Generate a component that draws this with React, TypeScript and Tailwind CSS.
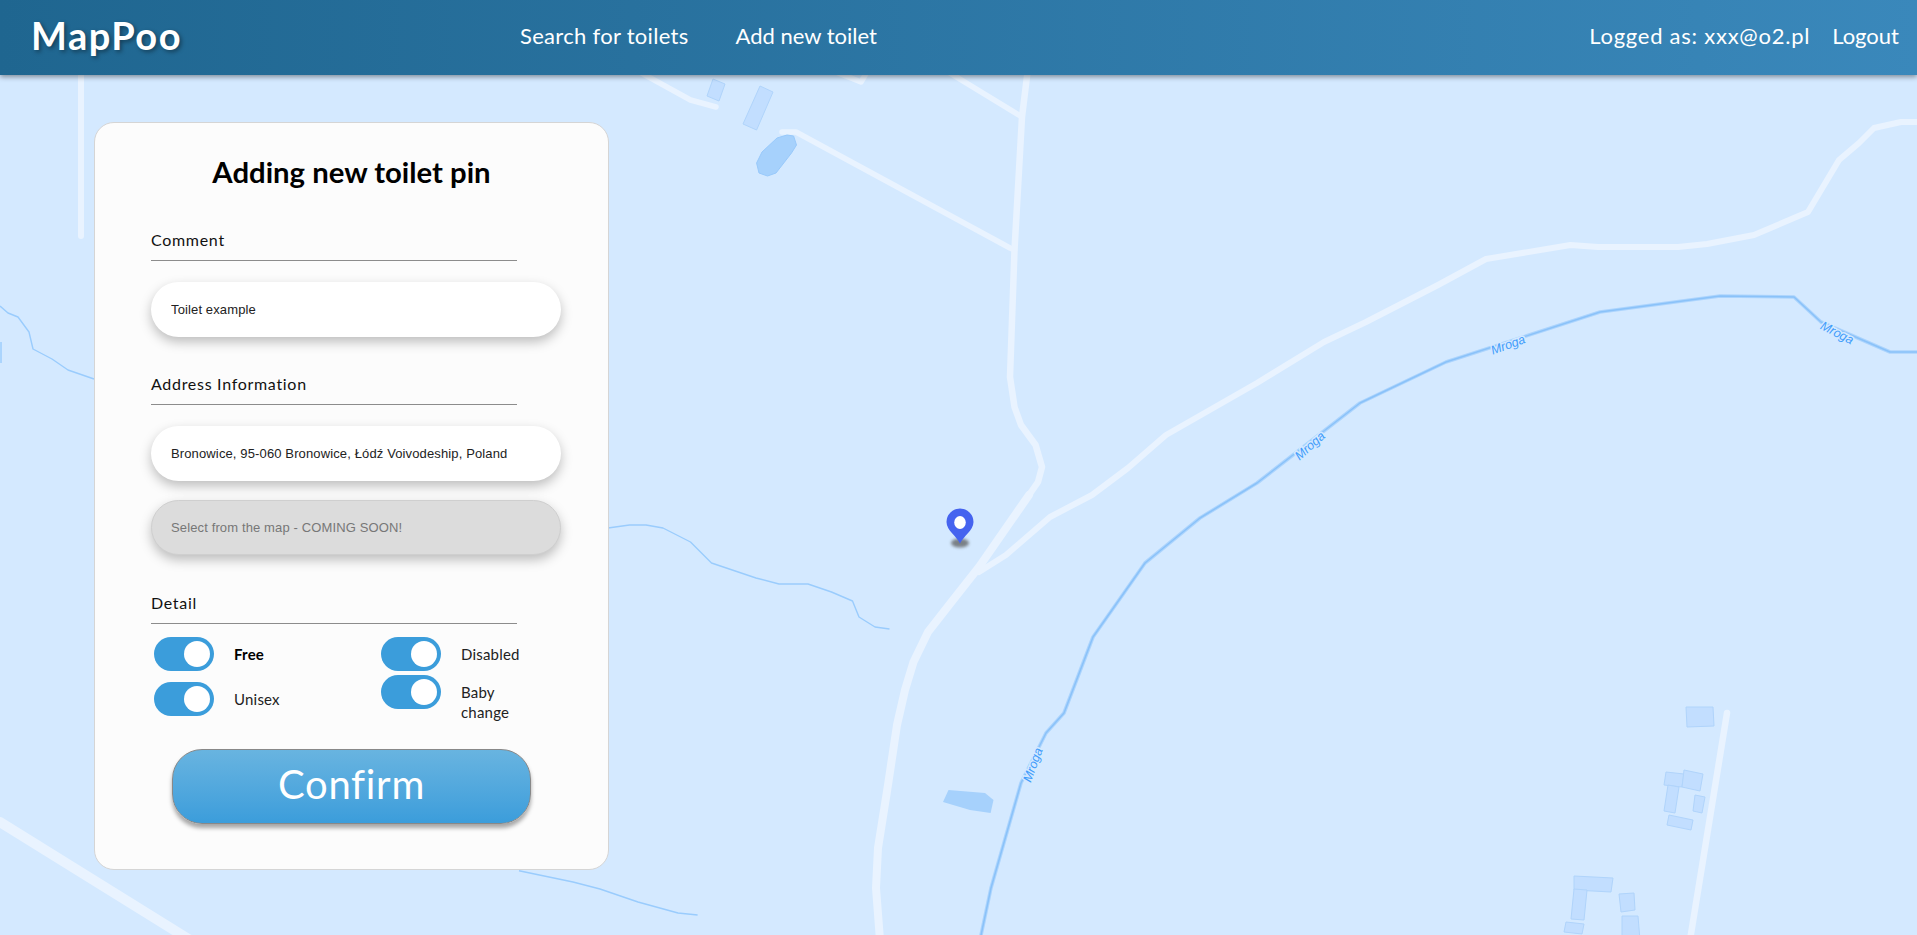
import React from "react";

const buildings = [
  "713,79 725,84 719,101 707,96",
  "760,86 773,92 756.6,130 743,124",
  "1686,707 1713,707 1714,726 1687,727",
  "1666,772 1684,774 1682,787 1664,785",
  "1684,770 1703,774 1700,791 1682,787",
  "1668,785 1679,787 1675,813 1664,811",
  "1695,795 1705,797 1702,813 1693,811",
  "1669,815 1693,820 1691,830 1667,825",
  "1574,876 1613,878 1611,892 1574,890",
  "1574,889 1587,890 1584,920 1571,919",
  "1566,922 1584,924 1582,934 1564,932",
  "1619,894 1634,893 1635,910 1621,912",
  "1622,916 1638,916 1640,940 1622,940",
];

const roads = [
  { w: 6.5, p: "1029,60 1022,117 1014.5,250 1010,377 1014.5,407 1021,425 1035.6,445 1042,467 1038,482 1029,495" },
  { w: 8, p: "1029,495 979,567 953,600 928,632 913.5,662 905,690 897,725 888,785 878,848 876,888 880,940" },
  { w: 6, p: "1917,122 1901,122 1874,128 1859,143 1839,160 1808,212 1754,235 1707,244 1678,247 1598,247 1570.5,245 1486,259 1438,285 1366,322 1324,342 1257,383 1166,435 1128,468 1092,495 1050,517 1006,555 979,572" },
  { w: 5.5, p: "782,132 796,132 1010,248 1014.5,250" },
  { w: 5.5, p: "945,70 1022,117" },
  { w: 5.5, p: "636,70 690.5,100 716,107" },
  { w: 5.5, p: "836,72 861,82 867,72" },
  { w: 6, p: "81,70 81,236" },
  { w: 10, p: "0,822 190,940" },
  { w: 6.5, p: "1727,713 1690,940" },
];

const streams = [
  "608,528 629.5,525 646,525 663,528 690.5,542 711.5,563 756,578 779,584 808,584 831.5,592 852.5,601 859,617 875,627 889.5,629",
  "519,870.7 573,882 600,889 638,902 678,913 697.6,915",
  "0,306 8,313 18,317 29,332 33,349 52,359 68,370 94,379",
  "1,342 1,363",
];

const river =
  "980,940 991,888 1021,783 1046,733 1064,713 1093,637 1145,563 1200,518 1257,483 1360,403 1446,362 1600,312 1720,296 1794,297 1821,322 1890,352 1917,352";

const riverLabels = [
  { x: 1033, y: 765, r: -70 },
  { x: 1310, y: 446, r: -42 },
  { x: 1508, y: 345, r: -20 },
  { x: 1837, y: 333, r: 27 },
];

function MapBackground() {
  return (
    <svg className="absolute inset-0 h-full w-full" viewBox="0 75 1917 860" fill="none">
      <defs>
        <filter id="pinShadow" x="-50%" y="-100%" width="200%" height="300%">
          <feGaussianBlur stdDeviation="1.6" />
        </filter>
      </defs>
      {roads.map((r) => (
        <polyline key={r.p} points={r.p} stroke="#e9f3ff" strokeWidth={r.w} strokeLinecap="round" strokeLinejoin="round" />
      ))}
      {buildings.map((p) => (
        <polygon key={p} points={p} fill="#c2deff" stroke="#b0d4fb" strokeWidth="1" />
      ))}
      <polygon
        points="793.6,136 796.5,145 791.5,153 776,173 767.5,176 759,173 756.6,163 762,152 777,138 787,135"
        fill="#a6d1fc"
        stroke="#98c9fb"
        strokeWidth="1"
        strokeLinejoin="round"
      />
      <polygon points="948.5,790 985,793 993.5,800 990.6,813 970,810 943,802" fill="#a6d1fc" />
      {streams.map((p) => (
        <polyline key={p} points={p} stroke="#9accfd" strokeWidth="1.4" strokeLinejoin="round" />
      ))}
      <polyline points={river} stroke="#acd4fd" strokeWidth="3.6" strokeLinejoin="round" />
      <polyline points={river} stroke="#8ac2f9" strokeWidth="1.5" strokeLinejoin="round" />
      {riverLabels.map((l) => (
        <g key={l.x} transform={`translate(${l.x} ${l.y}) rotate(${l.r})`}>
          <text
            textAnchor="middle"
            dominantBaseline="central"
            fontFamily="Liberation Sans, sans-serif"
            fontStyle="italic"
            fontSize="12.5"
            fill="#3f9cfb"
            stroke="#d4e9ff"
            strokeWidth="3"
            paintOrder="stroke"
          >
            Mroga
          </text>
        </g>
      ))}
      <ellipse cx="960" cy="543" rx="9" ry="4.5" fill="#555" opacity="0.7" filter="url(#pinShadow)" />
      <path
        d="M960 543.5 C957 536.5 946.5 530.5 946.5 522 A13.5 13.5 0 0 1 973.5 522 C973.5 530.5 963 536.5 960 543.5 Z"
        fill="#4563ef"
      />
      <ellipse cx="960" cy="522.5" rx="5.8" ry="6.4" fill="#fff" />
    </svg>
  );
}

function SectionLabel({ children, className }: { children: React.ReactNode; className: string }) {
  return (
    <div className={`w-[366px] h-[33px] border-b border-[#8c8c8c] text-[16px] leading-[24px] tracking-[0.7px] text-[#111] ${className}`}>
      {children}
    </div>
  );
}

function PillInput({ value, className, disabled }: { value: string; className: string; disabled?: boolean }) {
  return (
    <input
      readOnly
      value={value}
      disabled={disabled}
      className={`block w-[410px] h-[55px] rounded-full [font-family:'Liberation_Sans',Arial,sans-serif] text-[13px] tracking-[0.13px] outline-none shadow-[0_5px_12px_rgba(0,0,0,0.25)] ${
        disabled
          ? "bg-[#dcdcdc] border border-[#cfcfcf] pl-[19px] pr-[19px] text-[#777]"
          : "bg-white px-[20px] text-[#222]"
      } ${className}`}
    />
  );
}

function Toggle({ label, bold, labelClass }: { label: string; bold?: boolean; labelClass?: string }) {
  return (
    <div className="flex items-start">
      <div className="flex h-[34px] w-[60px] shrink-0 items-center justify-end rounded-full bg-[#3b9ddb] pr-[4px]">
        <div className="h-[26px] w-[26px] rounded-full bg-white" />
      </div>
      <div className={`ml-[20px] mt-[7px] text-[15px] leading-[20px] tracking-[0.2px] text-[#222] ${bold ? "font-bold text-black" : ""} ${labelClass ?? ""}`}>
        {label}
      </div>
    </div>
  );
}

export default function App() {
  return (
    <div className="flex h-[935px] flex-col overflow-hidden bg-[#d4e9ff] [font-family:Lato,sans-serif]">
      <header className="relative z-10 flex h-[75px] shrink-0 items-center bg-gradient-to-r from-[#1f6690] to-[#3a88bb] pb-[4px] text-white shadow-[0_2px_5px_rgba(0,0,0,0.4)]">
        <div className="mb-[2px] ml-[31px] w-[489px] text-[38px] font-bold leading-none tracking-[1.5px] [text-shadow:2px_2px_4px_rgba(0,0,0,0.4)]">
          MapPoo
        </div>
        <nav className="flex gap-[47px] text-[22px]">
          <span className="tracking-[0.3px]">Search for toilets</span>
          <span>Add new toilet</span>
        </nav>
        <div className="ml-auto mr-[18px] flex gap-[22px] text-[22px]">
          <span className="tracking-[0.75px]">Logged as: xxx@o2.pl</span>
          <span>Logout</span>
        </div>
      </header>
      <main className="relative flex-1">
        <MapBackground />
        <section className="relative ml-[94px] mt-[47px] w-[515px] rounded-[20px] border border-[#d5d5d5] bg-[#fcfcfc] pl-[56px] pt-[31px] pb-[45px]">
          <h1 className="-ml-[56px] text-center text-[29.3px] font-bold leading-[36px] text-black">Adding new toilet pin</h1>
          <SectionLabel className="mt-[38px]">Comment</SectionLabel>
          <PillInput value="Toilet example" className="mt-[21px]" />
          <SectionLabel className="mt-[35px]">Address Information</SectionLabel>
          <PillInput value="Bronowice, 95-060 Bronowice, Łódź Voivodeship, Poland" className="mt-[21px]" />
          <PillInput value="Select from the map - COMING SOON!" disabled className="mt-[19px]" />
          <SectionLabel className="mt-[36px]">Detail</SectionLabel>
          <div className="ml-[3px] mt-[13px] flex">
            <div className="flex w-[227px] flex-col gap-[11px]">
              <Toggle label="Free" bold />
              <Toggle label="Unisex" />
            </div>
            <div className="flex flex-col gap-[4px]">
              <Toggle label="Disabled" />
              <Toggle label="Baby change" labelClass="w-[60px]" />
            </div>
          </div>
          <button className="ml-[21px] mt-[27px] block h-[75px] w-[359px] rounded-[30px] border border-[#888] bg-gradient-to-b from-[#68b4e0] to-[#3b9ddb] pb-[6px] text-[40px] tracking-[0.7px] text-white shadow-[0_4px_4px_rgba(0,0,0,0.35)]">
            Confirm
          </button>
        </section>
      </main>
    </div>
  );
}
